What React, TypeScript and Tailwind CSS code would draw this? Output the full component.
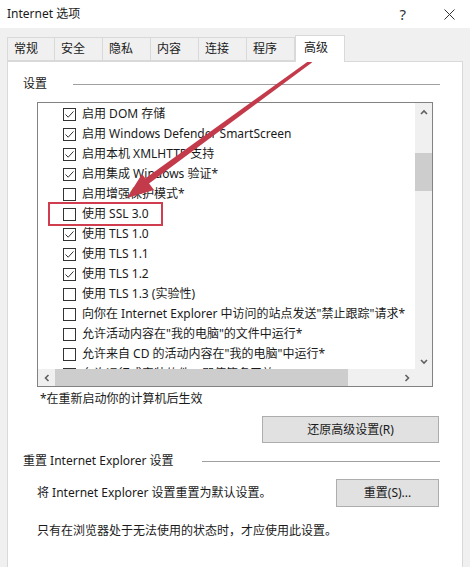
import React from 'react';

const font = "font-['Noto_Sans','Noto_Sans_CJK_SC',sans-serif]";

const items: { label: string; checked: boolean }[] = [
  { label: '启用 DOM 存储', checked: true },
  { label: '启用 Windows Defender SmartScreen', checked: true },
  { label: '启用本机 XMLHTTP 支持', checked: true },
  { label: '启用集成 Windows 验证*', checked: true },
  { label: '启用增强保护模式*', checked: false },
  { label: '使用 SSL 3.0', checked: false },
  { label: '使用 TLS 1.0', checked: true },
  { label: '使用 TLS 1.1', checked: true },
  { label: '使用 TLS 1.2', checked: true },
  { label: '使用 TLS 1.3 (实验性)', checked: false },
  { label: '向你在 Internet Explorer 中访问的站点发送"禁止跟踪"请求*', checked: false },
  { label: '允许活动内容在"我的电脑"的文件中运行*', checked: false },
  { label: '允许来自 CD 的活动内容在"我的电脑"中运行*', checked: false },
  { label: '允许运行或安装软件，即使签名无效', checked: false },
];

const tabs = ['常规', '安全', '隐私', '内容', '连接', '程序'];

function Checkbox({ checked }: { checked: boolean }) {
  return (
    <svg width="13" height="13" viewBox="0 0 13 13" className="shrink-0">
      <rect x="0.5" y="0.5" width="12" height="12" fill="#fff" stroke="#333" />
      {checked && <path d="M2.5 6.5 L5.2 9.2 L10.5 3.4" fill="none" stroke="#333" strokeWidth="1" />}
    </svg>
  );
}

function Chevron({ dir }: { dir: 'up' | 'down' | 'left' | 'right' }) {
  const d = {
    up: 'M2 7 L5 4 L8 7',
    down: 'M2 4 L5 7 L8 4',
    left: 'M6.5 2 L3.5 5 L6.5 8',
    right: 'M3.5 2 L6.5 5 L3.5 8',
  }[dir];
  return (
    <svg width="10" height="10" viewBox="0 0 10 10">
      <path d={d} fill="none" stroke="#606060" strokeWidth="1.6" />
    </svg>
  );
}

function Button({ children, className }: { children: React.ReactNode; className: string }) {
  return (
    <div className={`flex items-center justify-center border border-[#adadad] bg-[#e1e1e1] text-[12px] text-[#1a1a1a] ${className}`}>
      {children}
    </div>
  );
}

export default function App() {
  return (
    <div className={`relative w-[470px] h-[567px] overflow-hidden bg-[#f0f0f0] text-[#1a1a1a] ${font}`}>
      {/* title bar */}
      <div className="flex h-[28px] items-center bg-white pl-[7px]">
        <span className="text-[12px]">Internet 选项</span>
        <span className="ml-auto mr-[38px] text-[15px] text-[#333]">?</span>
        <svg width="11" height="11" viewBox="0 0 11 11" className="mr-[15px]">
          <path d="M0.5 0.5 L10.5 10.5 M10.5 0.5 L0.5 10.5" stroke="#333" strokeWidth="1" />
        </svg>
      </div>

      {/* tabs */}
      <div className="mt-[7px] flex items-end pl-[7px]">
        {tabs.map((t, i) => (
          <div
            key={t}
            className={`flex h-[24px] w-[48px] items-center border-t border-b border-r border-[#d9d9d9] bg-[#f0f0f0] pl-[6px] text-[12px] ${i === 0 ? 'border-l w-[47px]' : ''}`}
          >
            {t}
          </div>
        ))}
        <div className="relative z-10 -mb-px flex h-[27px] w-[50px] items-start border-x border-t border-[#d9d9d9] bg-white pl-[8px] pt-[3px] text-[12px]">
          高级
        </div>
      </div>

      {/* panel */}
      <div className="mx-[7px] h-[520px] border border-[#d9d9d9] bg-white">
        {/* group: settings */}
        <div className="mt-[13px] flex items-center pl-[15px] pr-[22px]">
          <span className="text-[12px]">设置</span>
          <div className="ml-[26px] h-px flex-1 bg-[#a0a0a0]" />
        </div>

        {/* list box */}
        <div className="ml-[29px] mt-[9px] flex h-[285px] w-[396px] flex-col border border-[#828282] bg-white">
          <div className="flex min-h-0 flex-1">
            <div className="flex-1 overflow-hidden pt-[1px]">
              {items.map((it) => (
                <div key={it.label} className="flex h-[20px] items-center whitespace-nowrap pl-[25px]">
                  <Checkbox checked={it.checked} />
                  <span className="ml-[6px] text-[12px]">{it.label}</span>
                </div>
              ))}
            </div>
            <div className="flex w-[17px] flex-col items-center bg-[#f0f0f0]">
              <div className="flex h-[17px] items-center">
                <Chevron dir="up" />
              </div>
              <div className="mt-[33px] h-[38px] w-[17px] bg-[#cdcdcd]" />
              <div className="mt-auto flex h-[17px] items-center">
                <Chevron dir="down" />
              </div>
            </div>
          </div>
          <div className="flex h-[17px] shrink-0">
            <div className="flex flex-1 items-center bg-[#f0f0f0]">
              <div className="flex w-[17px] justify-center">
                <Chevron dir="left" />
              </div>
              <div className="h-[17px] w-[293px] bg-[#cdcdcd]" />
              <div className="ml-auto flex w-[17px] justify-center">
                <Chevron dir="right" />
              </div>
            </div>
            <div className="w-[17px] bg-[#f0f0f0]" />
          </div>
        </div>

        <div className="ml-[32px] mt-[3px] text-[12px]">*在重新启动你的计算机后生效</div>

        <div className="mt-[8px] flex pr-[23px]">
          <Button className="ml-auto h-[27px] w-[177px]">还原高级设置(R)</Button>
        </div>

        {/* group: reset */}
        <div className="mt-[9px] flex items-center pl-[15px] pr-[22px]">
          <span className="text-[12px]">重置 Internet Explorer 设置</span>
          <div className="ml-[28px] h-px flex-1 bg-[#a0a0a0]" />
        </div>

        <div className="mt-[9px] flex items-start pl-[29px] pr-[23px]">
          <span className="mt-[5px] text-[12px]">将 Internet Explorer 设置重置为默认设置。</span>
          <Button className="ml-auto h-[28px] w-[103px]">重置(S)...</Button>
        </div>

        <div className="ml-[29px] mt-[15px] text-[12px]">只有在浏览器处于无法使用的状态时，才应使用此设置。</div>
      </div>

      {/* annotation overlay */}
      <div className="absolute left-[48px] top-[202px] h-[24px] w-[115px] border-2 border-[#cf3d4e]" />
      <svg className="absolute left-0 top-0" width="470" height="567" viewBox="0 0 470 567">
        <polygon points="310,60 312,62.5 147,185 143,180" fill="#c33a4b" />
        <polygon points="127,198 154,190 142,174" fill="#c33a4b" />
      </svg>
    </div>
  );
}
